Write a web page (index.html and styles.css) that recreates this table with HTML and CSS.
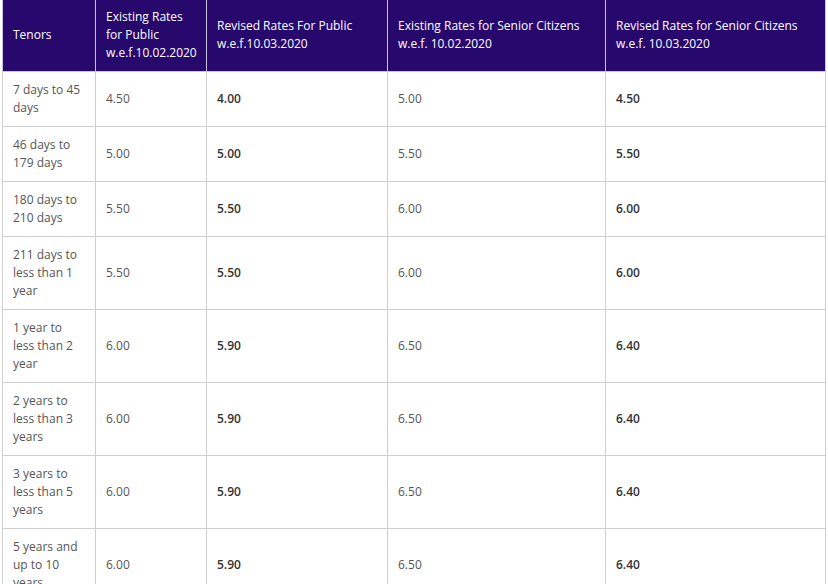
FILE: index.html
```html
<!DOCTYPE html>
<html>
<head>
<meta charset="utf-8">
<link rel="stylesheet" href="styles.css">
</head>
<body>
<table class="rates">
  <colgroup>
    <col class="c1"><col class="c2"><col class="c3"><col class="c4"><col class="c5">
  </colgroup>
  <thead>
    <tr>
      <th>Tenors</th>
      <th>Existing Rates for Public w.e.f.10.02.2020</th>
      <th>Revised Rates For Public w.e.f.10.03.2020</th>
      <th>Existing Rates for Senior Citizens w.e.f. 10.02.2020</th>
      <th>Revised Rates for Senior Citizens w.e.f. 10.03.2020</th>
    </tr>
  </thead>
  <tbody>
    <tr><td>7 days to 45 days</td><td>4.50</td><td class="b">4.00</td><td>5.00</td><td class="b">4.50</td></tr>
    <tr><td>46 days to 179 days</td><td>5.00</td><td class="b">5.00</td><td>5.50</td><td class="b">5.50</td></tr>
    <tr><td>180 days to 210 days</td><td>5.50</td><td class="b">5.50</td><td>6.00</td><td class="b">6.00</td></tr>
    <tr><td>211 days to less than 1 year</td><td>5.50</td><td class="b">5.50</td><td>6.00</td><td class="b">6.00</td></tr>
    <tr><td>1 year to less than 2 year</td><td>6.00</td><td class="b">5.90</td><td>6.50</td><td class="b">6.40</td></tr>
    <tr><td>2 years to less than 3 years</td><td>6.00</td><td class="b">5.90</td><td>6.50</td><td class="b">6.40</td></tr>
    <tr><td>3 years to less than 5 years</td><td>6.00</td><td class="b">5.90</td><td>6.50</td><td class="b">6.40</td></tr>
    <tr><td>5 years and up to 10 years</td><td>6.00</td><td class="b">5.90</td><td>6.50</td><td class="b">6.40</td></tr>
  </tbody>
</table>
</body>
</html>
```

FILE: styles.css
```css
html, body {
  margin: 0;
  padding: 0;
  background: #fff;
}
body {
  padding-left: 2px;
  font-family: "Open Sans", "Liberation Sans", sans-serif;
  font-size: 12px;
  color: #555;
}
.rates {
  border-collapse: collapse;
  table-layout: fixed;
  width: 823px;
}
.c1 { width: 93px; }
.c2 { width: 111px; }
.c3 { width: 181px; }
.c4 { width: 218px; }
.c5 { width: 220px; }
.rates th {
  background: #27086d;
  color: #fff;
  font-weight: 400;
  text-align: left;
  vertical-align: middle;
  line-height: 18px;
  padding: 7px 10px 9px 10px;
  height: 55px;
  border: 1px solid #c9c4dc;
  border-top: none;
}
.rates td {
  line-height: 18px;
  padding: 9px 10px 9px 10px;
  vertical-align: middle;
  border: 1px solid #cfcfcf;
}
.rates td.b {
  font-weight: 600;
  color: #333;
}
```
